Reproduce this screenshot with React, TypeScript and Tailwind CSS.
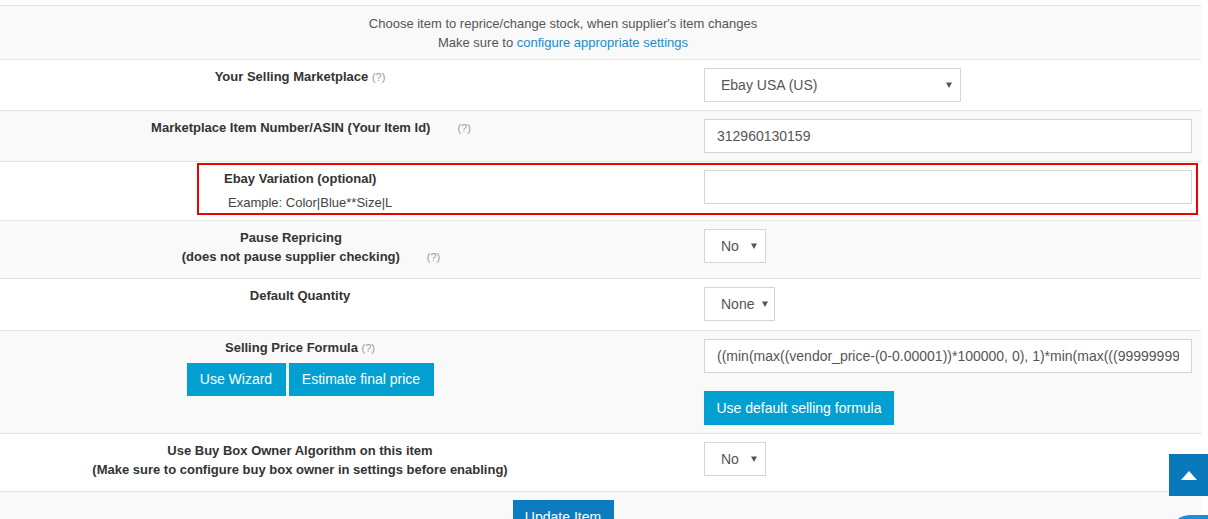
import React from "react";

const FORMULA =
  "((min(max((vendor_price-(0-0.00001))*100000, 0), 1)*min(max(((99999999-vendor_price)+0.00001)*100000, 0), 1))*(vendor_price*1.2+0.3))";

function Hint({ className = "" }: { className?: string }) {
  return <span className={`text-[11px] font-normal text-[#999] ${className}`}>(?)</span>;
}

function FakeSelect({ value, width }: { value: string; width: string }) {
  return (
    <div
      className={`flex h-[34px] items-center justify-between border border-[#d5d5d5] bg-white pl-[16px] pr-[8px] text-[14px] text-[#555] ${width}`}
    >
      <span>{value}</span>
      <svg width="6" height="6" viewBox="0 0 6 6" className="ml-2 shrink-0">
        <path d="M0 0.5h6L3 6z" fill="#555" />
      </svg>
    </div>
  );
}

function Row({
  height,
  striped,
  left,
  right,
}: {
  height: string;
  striped?: boolean;
  left: React.ReactNode;
  right?: React.ReactNode;
}) {
  return (
    <div className={`flex border-t border-[#e3e3e3] ${height} ${striped ? "bg-[#f9f9f9]" : "bg-white"}`}>
      <div className="w-[600px] shrink-0 pt-[8px] text-center text-[13px] font-bold leading-[18.5px] text-[#333]">
        {left}
      </div>
      <div className="flex-1 pt-[8px] pl-[104px] pr-[9px]">{right}</div>
    </div>
  );
}

export default function App() {
  return (
    <div className="relative h-[519px] w-[1208px] overflow-hidden bg-white font-['Liberation_Sans',Arial,sans-serif]">
      <div className="w-[1201px] pt-[5px]">
        {/* header */}
        <div className="h-[54px] border-t border-[#e3e3e3] bg-[#f9f9f9] pt-[8px] pr-[75px] text-center text-[13px] leading-[19px] text-[#555]">
          <p>Choose item to reprice/change stock, when supplier's item changes</p>
          <p>
            Make sure to <a className="text-[#1a8ccc]">configure appropriate settings</a>
          </p>
        </div>

        <Row
          height="h-[51px]"
          left={
            <p>
              Your Selling Marketplace <Hint />
            </p>
          }
          right={<FakeSelect value="Ebay USA (US)" width="w-[257px]" />}
        />

        <Row
          height="h-[51px]"
          striped
          left={
            <p className="pl-[22px]">
              Marketplace Item Number/ASIN (Your Item Id)
              <Hint className="ml-[27px]" />
            </p>
          }
          right={
            <input
              readOnly
              value="312960130159"
              className="h-[34px] w-[488px] border border-[#d5d5d5] bg-white px-[12px] text-[14px] text-[#555] outline-none"
            />
          }
        />

        <Row
          height="h-[59px]"
          left={
            <div className="pl-[224px] text-left">
              <p>Ebay Variation (optional)</p>
              <p className="mt-[5px] pl-[4px] text-[13px] font-normal text-[#444]">Example: Color|Blue**Size|L</p>
            </div>
          }
          right={
            <input
              readOnly
              value=""
              className="h-[34px] w-[488px] border border-[#d5d5d5] bg-white px-[12px] text-[14px] outline-none"
            />
          }
        />

        <Row
          height="h-[58px]"
          striped
          left={
            <div>
              <p className="pr-[18px]">Pause Repricing</p>
              <p className="pl-[22px]">
                (does not pause supplier checking)
                <Hint className="ml-[27px]" />
              </p>
            </div>
          }
          right={<FakeSelect value="No" width="w-[62px]" />}
        />

        <Row
          height="h-[52px]"
          left={<p>Default Quantity</p>}
          right={<FakeSelect value="None" width="w-[71px]" />}
        />

        <Row
          height="h-[103px]"
          striped
          left={
            <div className="flex flex-col items-center">
              <p>
                Selling Price Formula <Hint />
              </p>
              <div className="mt-[5px] flex gap-[3px] pl-[20px] font-normal">
                <button className="h-[33px] w-[99px] bg-[#02a0d0] text-[14px] text-white">Use Wizard</button>
                <button className="h-[33px] w-[145px] bg-[#02a0d0] text-[14px] text-white">Estimate final price</button>
              </div>
            </div>
          }
          right={
            <div className="flex flex-col items-start">
              <input
                readOnly
                value={FORMULA}
                className="h-[34px] w-[488px] border border-[#d5d5d5] bg-white px-[12px] text-[14px] text-[#555] outline-none"
              />
              <button className="mt-[18px] h-[34px] w-[190px] bg-[#02a0d0] text-[14px] text-white">
                Use default selling formula
              </button>
            </div>
          }
        />

        <Row
          height="h-[58px]"
          left={
            <div>
              <p>Use Buy Box Owner Algorithm on this item</p>
              <p>(Make sure to configure buy box owner in settings before enabling)</p>
            </div>
          }
          right={<FakeSelect value="No" width="w-[62px]" />}
        />

        <div className="flex h-[60px] justify-center border-t border-[#e3e3e3] bg-[#f9f9f9] pt-[8px] pr-[75px]">
          <button className="h-[34px] w-[101px] bg-[#0b7cc0] text-[14px] text-white">Update Item</button>
        </div>
      </div>

      {/* back to top */}
      <div className="absolute left-[1169px] top-[454px] flex h-[42px] w-[39px] items-center justify-center bg-[#0a79bc]">
        <svg width="16" height="9" viewBox="0 0 16 9">
          <path d="M0 9L8 0l8 9z" fill="#fff" />
        </svg>
      </div>

      {/* chat bubble peeking in */}
      <div className="absolute left-[1170px] top-[515px] h-[40px] w-[60px] rounded-full bg-[#1a8fe0]" />

      {/* highlight annotation */}
      <div className="pointer-events-none absolute left-[197px] top-[163px] h-[52px] w-[1001px] border-2 border-[#ee0000]" />
    </div>
  );
}
